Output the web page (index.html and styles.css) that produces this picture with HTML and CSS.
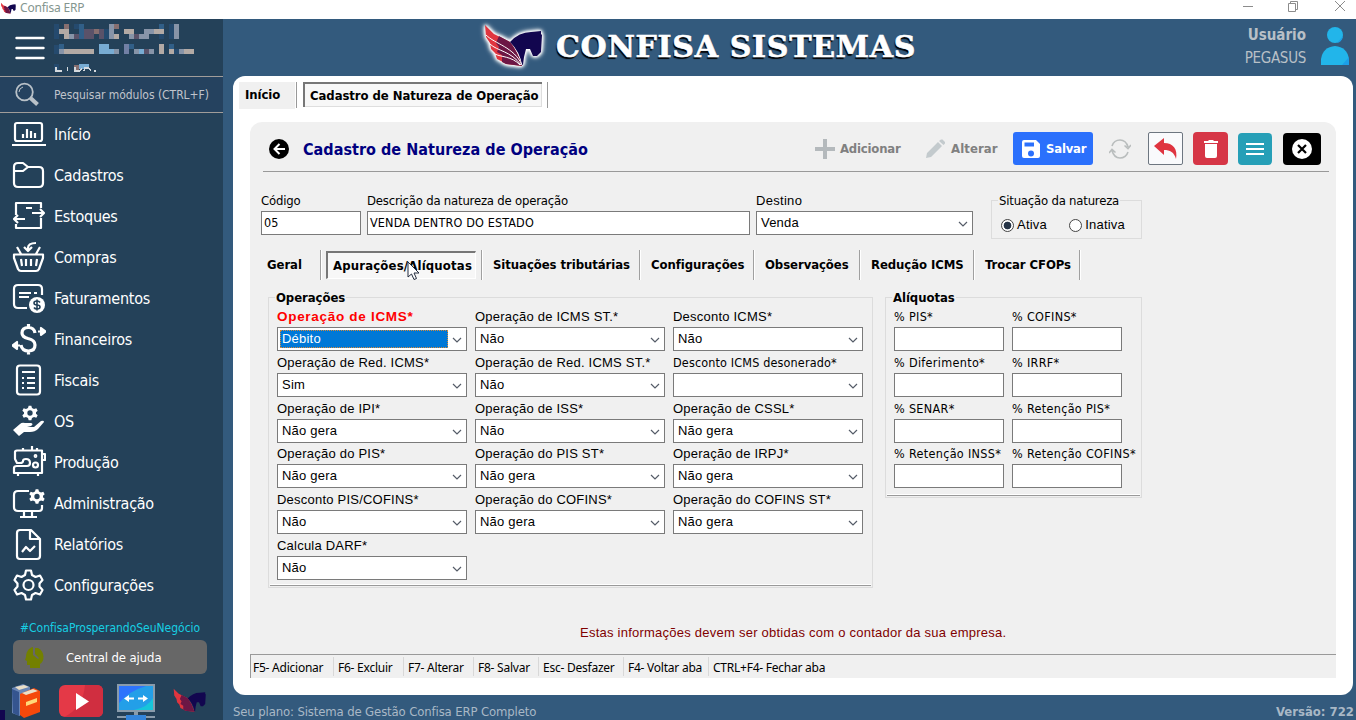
FILE: index.html
```html
<!DOCTYPE html>
<html lang="pt-BR">
<head>
<meta charset="utf-8">
<title>Confisa ERP</title>
<link rel="stylesheet" href="styles.css">
</head>
<body>
<svg class="defs" width="0" height="0" aria-hidden="true">
  <symbol id="pegasus" viewBox="0 0 64 46">
    <path fill="#e0353f" d="M3 3L12 12L28 20Q36 30 40 44L24 42L19 39L15 37L13 31L9 27L8 21L4 15Z"/>
    <path fill="#6c1745" d="M17 14L28 20Q36 30 40 44L24 42L20 40V33L15 30L17 25L14 21Z"/>
    <path fill="#12064f" d="M28 20Q37 10 49 10L59 9V12L60 13L59 30L55 34H51L48 27L44 27L42 35L41 43H40Q38 30 28 20Z"/>
  </symbol>
  <symbol id="feathers" viewBox="0 0 64 46">
    <path fill="none" stroke="#fff" stroke-width="1" d="M4 13C13 22 32 25 40 43M8 22C15 29 29 29 39 43M13 32C18 35 30 34 38 43"/>
  </symbol>
  <symbol id="chev" viewBox="0 0 10 6"><path d="M1 1L5 5L9 1" fill="none" stroke="#555c68" stroke-width="1.2"/></symbol>
  <symbol id="gear" viewBox="0 0 24 24"><path fill-rule="evenodd" d="M10 1H14L15 4.5L18 6L21.500 5L23.500 8.500L21 11V13L23.500 15.500L21.500 19L18 18L15 19.500L14 23H10L9 19.500L6 18L2.500 19L.5 15.500L3 13V11L.5 8.500L2.500 5L6 6L9 4.500ZM12 8A4 4 0 1 0 12 16A4 4 0 1 0 12 8Z"/></symbol>
</svg>

<div class="titlebar">
  <svg class="tb-logo" width="17" height="12"><use href="#pegasus"/></svg>
  <span class="tb-name">Confisa ERP</span>
  <svg class="tb-ctl" width="104" height="14" fill="none" stroke="#8c8c8c"><path d="M1 6.500H11"/><path d="M46.500 3.500H53.500V11.500H46.500ZM48.500 3.500V1.500H55.500V9.500H53.500"/><path d="M93 1L103 11M103 1L93 11"/></svg>
</div>

<div class="app">
  <aside class="side">
    <div class="company">
      <svg width="30" height="24" stroke="#fff" stroke-width="2.400" stroke-linecap="round"><path d="M1.500 2H28.500M1.500 12H28.500M1.500 22H28.500"/></svg>
      <svg class="mosaic" width="145" height="53" shape-rendering="crispEdges">
        <g fill="#254a6e"><path d="M0 5h5v15h-5zM10 5h5v5h-5zM20 5h5v5h-5zM50 10h5v10h-5zM115 5h5v15h-5zM105 15h5v5h-5zM0 26h5v9h-5zM45 26h5v5h-5zM70 30h5v5h-5zM120 30h5v5h-5zM0 45h5v7h-5z"/></g>
        <g fill="#b3aaa5"><path d="M5 10h5v5h-5zM10 10h5v10h-5zM60 5h5v10h-5zM70 10h10v5h-10zM100 10h10v5h-10zM10 30h30v5h-30zM105 25h5v10h-5zM115 30h5v5h-5zM130 30h10v5h-10zM65 5h-5v15h5z"/></g>
        <g fill="#876f70"><path d="M10 5h5v5h-5zM25 10h5v5h-5zM40 10h5v5h-5zM60 5h5v5h-5zM20 46h5v5h-5z"/></g>
        <g fill="#5a5269"><path d="M20 15h5v5h-5zM30 10h10v10h-10zM45 10h5v10h-5zM80 15h5v5h-5zM90 30h5v5h-5z"/></g>
        <g fill="#8794a8"><path d="M15 15h5v5h-5zM55 5h5v15h-5zM75 15h5v5h-5zM85 15h10v5h-10zM120 5h5v15h-5zM90 10h10v5h-10zM5 30h5v5h-5zM60 30h5v5h-5zM80 30h5v5h-5zM95 30h5v5h-5zM125 30h5v5h-5z"/></g>
        <g fill="#78acd3"><path d="M45 25h10v10h-10zM55 30h5v5h-5zM85 30h5v5h-5zM25 45h10v5h-10z"/></g>
        <path fill="#315f88" d="M25 5h5v15h-5zM5 25h5v5h-5zM75 25h5v5h-5zM105 5h5v5h-5zM115 25h5v5h-5z"/>
        <path fill="#7280a5" d="M70 25h5v10h-5z"/>
        <path fill="none" stroke="#d4d9de" stroke-width="1.300" d="M2 48v4h6M13.500 48v4M21 48v4h5l2-3M30 52l1-3h4l2 3M40 52h2"/>
      </svg>
    </div>
    <div class="search">
      <svg width="26" height="25" fill="none" stroke="#b9c1c8"><circle cx="10.500" cy="10" r="8.300" stroke-width="1.800"/><path d="M5 10A5.500 5.500 0 0 1 9 5" stroke-width="1"/><path d="M16.500 16L23.500 22.500" stroke-width="4"/></svg>
      <span>Pesquisar módulos (CTRL+F)</span>
    </div>
    <nav class="menu">
      <a><svg viewBox="0 0 34 34"><rect x="3" y="6" width="27" height="18" rx="2"/><path d="M0 28H34M11 21V17M15 21V12M19 21V14M23 21V16"/></svg><span>Início</span></a>
      <a><svg viewBox="0 0 34 34"><path d="M2 9Q2 5 6 5H11L16 9H27Q31 9 31 13V25Q31 29 27 29H6Q2 29 2 25ZM2 13H11L16 9"/></svg><span>Cadastros</span></a>
      <a><svg viewBox="0 0 34 34"><path d="M4 16V4H29V9M4 25V29H29V19M14 9H20M20 14H32M28 10L32 14L28 18M13 20H2M6 16L2 20L6 24"/></svg><span>Estoques</span></a>
      <a><svg viewBox="0 0 34 34"><path d="M2 14.500H31V18L27 29Q26 31 24 31H9Q7 31 6 29L2 18ZM9 14L5 7M24 14L28 7M16 11V8Q16 3 24 3M12 7L16 11L20 7M9 19L10 26M14 19V26M19 19V26M25 19L24 26"/></svg><span>Compras</span></a>
      <a><svg viewBox="0 0 34 34"><path d="M15 27H6Q2 27 2 23V8Q2 4 6 4H26Q30 4 30 8V14M7 12H19M22 12H25M7 16H17"/><circle cx="25" cy="24" r="8" fill="#fff" stroke="none"/><path class="ink" d="M28 21.500Q27 20 25 20Q22 20 22 22Q22 24 25 24Q28 24 28 26Q28 28 25 28Q23 28 22 26.500M25 18.500V29.500"/></svg><span>Faturamentos</span></a>
      <a><svg viewBox="0 0 34 34"><path class="thick" d="M23 11Q22 5.500 16.500 5.500Q10 5.500 10 11Q10 15 16 16.500Q23 18 23 23Q23 29 16.500 29Q10 29 9 23M16.500 2V5M16.500 29V32.500"/><path fill="#fff" d="M26 9.500H29M29 6V13L33.500 9.500ZM8 23.500H5M5 20V27L.5 23.500Z"/></svg><span>Financeiros</span></a>
      <a><svg viewBox="0 0 34 34"><rect x="5" y="2.500" width="23" height="29" rx="3"/><path d="M10 9H23M10 15H12M15 15H23M10 20H12M15 20H23M10 25H12M15 25H23"/></svg><span>Fiscais</span></a>
      <a><svg viewBox="0 0 34 34"><use href="#gear" x="10" y="1" width="16" height="16" fill="#fff" stroke="none"/><path fill="#fff" stroke="none" d="M1 26L8 20Q10 18 13 19H19Q22 20 19 22L15 23H22L29 17Q32 16 32 18L26 25Q23 28 18 28H12L7 32Z"/></svg><span>OS</span></a>
      <a><svg viewBox="0 0 34 34"><path d="M5 18L3 14V7Q3 5.500 5 5.500H30V28H2V23Q2 21 5 21H15Q18 21 18 18Q18 14 14 14Q11 14 11 16Q11 18 8 18ZM11 3V5M20 1V5M25 3V5M6 29V31M26 29V31M30 9H33V15H30"/><circle cx="23.500" cy="11" r=".8"/><circle cx="23.500" cy="20" r="2.500"/></svg><span>Produção</span></a>
      <a><svg viewBox="0 0 34 34"><path d="M17 5H6Q2 5 2 9V21Q2 25 6 25H27Q30 25 30 22V19M12 25V30M20 25V30M8 31H25"/><use href="#gear" x="17" y="2" width="16" height="17" fill="#fff" stroke="none"/></svg><span>Administração</span></a>
      <a><svg viewBox="0 0 34 34"><path d="M5 6Q5 3 8 3H19L28 12V29Q28 32 25 32H8Q5 32 5 29ZM18 4V12H27M10 25L14 20L18 24L23 19"/></svg><span>Relatórios</span></a>
      <a><svg viewBox="0 0 34 34"><path d="M14 2.500H19L20 7L23.500 9L28 7.500L30.500 12L27.500 15.500V18.500L30.500 22L28 26.500L23.500 25L20 27L19 31.500H14L13 27L9.500 25L5 26.500L2.500 22L5.500 18.500V15.500L2.500 12L5 7.500L9.500 9L13 7Z"/><circle cx="16.500" cy="17" r="5"/></svg><span>Configurações</span></a>
    </nav>
    <div class="tag">#ConfisaProsperandoSeuNegócio</div>
    <div class="help">
      <svg width="20" height="21" fill="#738000"><path d="M8 0C3 1 1 6 1 10L0 13L2 14V18H5V21H15V17C20 15 20 4 13 1H10V7L14 11L13 12L8 8Z"/></svg>
      <span>Central de ajuda</span>
    </div>
    <div class="links">
      <svg width="28" height="35"><path fill="#6986b5" d="M0 4L11 0L18 3V8L8 12V32L0 29Z"/><path fill="#eadfc8" d="M3 3L12 1L17 3L7 6Z"/><path fill="#35558f" d="M0 5L7 8V32L1 29Z"/><path fill="#f5480b" d="M8 10L22 4L28 7V28L12 34L8 31Z"/><path fill="#eadfc8" d="M10 9L21 5L26 7L14 11Z"/><path fill="#ffd978" d="M14 18L25 14V18L14 22Z"/></svg>
      <svg width="44" height="32"><rect width="44" height="32" rx="6" fill="#e43947"/><path d="M26 0H38Q44 0 44 6V26Q44 32 38 32H5Q24 23 26 0Z" fill="#d02e40"/><path d="M17 8V25L30 16.500Z" fill="#fff"/></svg>
      <svg width="38" height="36"><path fill="#899bab" d="M0 0H38V28H0Z"/><path fill="#239fe8" d="M2 2H36V26H2Z"/><path fill="#2d74fc" d="M2 2H29Q12 7 2 19Z"/><path fill="#16c5da" d="M36 14V26H17Q31 23 36 14Z"/><path fill="#fff" d="M7 14.500L12 11V13.500H17V15.500H12V18ZM31 14.500L26 11V13.500H21V15.500H26V18Z"/><path fill="#899bab" d="M17 28H21V31H17ZM0 32H38V34H0Z"/><path fill="#3285dc" d="M9 31H29V36H9Z"/></svg>
      <svg width="36" height="26"><use href="#pegasus"/></svg>
    </div>
    <i class="corner"></i>
  </aside>

  <section class="main">
    <header class="head">
      <div class="brand">
        <svg width="68" height="51"><use href="#pegasus" x="1" y="2" width="64" height="46"/><use href="#feathers" x="1" y="2" width="64" height="46"/></svg>
        <span>CONFISA SISTEMAS</span>
      </div>
      <div class="user">
        <div><b>Usuário</b><span>PEGASUS</span></div>
        <svg width="28" height="38"><circle cx="14" cy="8" r="8" fill="#22b5ea"/><path fill="#22b5ea" d="M0 38V32Q2 20 14 19Q26 20 28 32V38Z"/><path fill="#1c9fe8" d="M21 38L28 30V38ZM16 16L22 9Q21 15 16 16Z"/></svg>
      </div>
    </header>

    <div class="panel">
      <div class="doctabs">
        <span class="doctab">Início</span>
        <span class="doctab on">Cadastro de Natureza de Operação</span>
      </div>

      <div class="sheet">
        <div class="toolbar">
          <svg class="back" width="20" height="20"><circle cx="10" cy="10" r="10"/><path d="M16 10H6M10.500 5L5.500 10L10.500 15" fill="none" stroke="#fff" stroke-width="2"/></svg>
          <h1>Cadastro de Natureza de Operação</h1>
          <div class="act add"><svg width="20" height="20" fill="#b4b9bc"><path d="M8 0H12V8H20V12H12V20H8V12H0V8H8Z"/></svg>Adicionar</div>
          <div class="act edit"><svg width="20" height="20" fill="#c3cacd"><path d="M0 19L1 14L12 3L16 7L5 18ZM13 2L15 .5H16.500L19 3V4.500L17.500 6Z"/></svg>Alterar</div>
          <div class="act save"><svg width="18" height="18"><path fill="#fff" fill-rule="evenodd" d="M2 0H14L18 4V16Q18 18 16 18H2Q0 18 0 16V2Q0 0 2 0ZM2.500 2.500V6.500H12V2.500ZM9 10.500A3 3 0 1 0 9 16.500A3 3 0 1 0 9 10.500Z"/></svg>Salvar</div>
          <svg class="sync" width="22" height="20" fill="none" stroke="#b9bdbd" stroke-width="1.600"><path d="M3 7Q5 1 11 1Q17 1 19 8M15.500 6.500L19 9.500L22 6M19 13Q17 19 11 19Q5 19 3 11.500M0 14L3 10.500L6.500 13.500"/></svg>
          <div class="sq undo"><svg width="24" height="21"><path fill="#df3440" d="M0 8L10 0V5C19 5 24 11 22 21C20 14 16 12 10 12V17Z"/></svg></div>
          <div class="sq trash"><svg width="14" height="18" fill="#fff"><path d="M0 1H4L5 0H9L10 1H14V3H0ZM1 4H13V16Q13 18 11 18H3Q1 18 1 16Z"/></svg></div>
          <div class="sq list"><svg width="18" height="12"><path stroke="#fff" stroke-width="2" d="M0 1H18M0 6H18M0 11H18"/></svg></div>
          <div class="sq close"><svg width="20" height="20"><circle cx="10" cy="10" r="10" fill="#fff"/><path d="M6 6L14 14M14 6L6 14" stroke="#000" stroke-width="2.200"/></svg></div>
        </div>

        <div class="top-fields">
          <label class="field f-cod"><span>Código</span><b class="box t">05</b></label>
          <label class="field f-desc"><span>Descrição da natureza de operação</span><b class="box t">VENDA DENTRO DO ESTADO</b></label>
          <label class="field f-dest"><span class="dst">Destino</span><b class="box ms">Venda<svg><use href="#chev"/></svg></b></label>
          <div class="radio-group">
            <h3>Situação da natureza</h3>
            <div class="radios ms"><i class="radio on"></i><span>Ativa</span><i class="radio"></i><span>Inativa</span></div>
          </div>
        </div>

        <div class="subtabs">
          <span class="st1">Geral</span><span class="st2"><em>Apurações/Alíquotas</em></span><span class="st3">Situações tributárias</span><span class="st4">Configurações</span><span class="st5">Observações</span><span class="st6">Redução ICMS</span><span class="st7">Trocar CFOPs</span>
        </div>

        <div class="groups">
          <div class="group ops">
            <h3>Operações</h3>
            <div class="grid ms">
              <label class="field hot"><span>Operação de ICMS*</span><b class="box"><mark>Débito</mark><svg><use href="#chev"/></svg></b></label>
              <label class="field"><span>Operação de ICMS ST.*</span><b class="box">Não<svg><use href="#chev"/></svg></b></label>
              <label class="field"><span>Desconto ICMS*</span><b class="box">Não<svg><use href="#chev"/></svg></b></label>
              <label class="field"><span>Operação de Red. ICMS*</span><b class="box">Sim<svg><use href="#chev"/></svg></b></label>
              <label class="field"><span>Operação de Red. ICMS ST.*</span><b class="box">Não<svg><use href="#chev"/></svg></b></label>
              <label class="field"><span class="tah">Desconto ICMS desonerado*</span><b class="box"><svg><use href="#chev"/></svg></b></label>
              <label class="field"><span>Operação de IPI*</span><b class="box">Não gera<svg><use href="#chev"/></svg></b></label>
              <label class="field"><span>Operação de ISS*</span><b class="box">Não<svg><use href="#chev"/></svg></b></label>
              <label class="field"><span>Operação de CSSL*</span><b class="box">Não gera<svg><use href="#chev"/></svg></b></label>
              <label class="field"><span>Operação do PIS*</span><b class="box">Não gera<svg><use href="#chev"/></svg></b></label>
              <label class="field"><span>Operação do PIS ST*</span><b class="box">Não gera<svg><use href="#chev"/></svg></b></label>
              <label class="field"><span>Operação de IRPJ*</span><b class="box">Não gera<svg><use href="#chev"/></svg></b></label>
              <label class="field"><span>Desconto PIS/COFINS*</span><b class="box">Não<svg><use href="#chev"/></svg></b></label>
              <label class="field"><span>Operação do COFINS*</span><b class="box">Não gera<svg><use href="#chev"/></svg></b></label>
              <label class="field"><span>Operação do COFINS ST*</span><b class="box">Não gera<svg><use href="#chev"/></svg></b></label>
              <label class="field"><span>Calcula DARF*</span><b class="box">Não<svg><use href="#chev"/></svg></b></label>
            </div>
          </div>
          <div class="group rates">
            <h3>Alíquotas</h3>
            <div class="grid">
              <label class="field"><span>% PIS*</span><b class="box"></b></label>
              <label class="field"><span>% COFINS*</span><b class="box"></b></label>
              <label class="field"><span>% Diferimento*</span><b class="box"></b></label>
              <label class="field"><span>% IRRF*</span><b class="box"></b></label>
              <label class="field"><span>% SENAR*</span><b class="box"></b></label>
              <label class="field"><span>% Retenção PIS*</span><b class="box"></b></label>
              <label class="field"><span>% Retenção INSS*</span><b class="box"></b></label>
              <label class="field"><span>% Retenção COFINS*</span><b class="box"></b></label>
            </div>
          </div>
        </div>

        <p class="note">Estas informações devem ser obtidas com o contador da sua empresa.</p>

        <div class="keys">
          <span class="k1">F5- Adicionar</span><span class="k2">F6- Excluir</span><span class="k3">F7- Alterar</span><span class="k4">F8- Salvar</span><span class="k5">Esc- Desfazer</span><span class="k6">F4- Voltar aba</span><span class="k7">CTRL+F4- Fechar aba</span>
        </div>
      </div>
    </div>

    <footer class="foot"><span>Seu plano: Sistema de Gestão Confisa ERP Completo</span><b>Versão: 722</b></footer>
  </section>
</div>
<svg class="cursor" width="13" height="20"><path d="M1 1V16L4.500 13L7 18.500L9.500 17.500L7 12H12Z" fill="#fff" stroke="#222b3d"/></svg>
</body>
</html>
```

FILE: styles.css
```css
* { box-sizing: border-box; }
body {
  margin: 0;
  width: 1356px;
  height: 720px;
  overflow: hidden;
  background: #fff;
  font: 13px/18px "DejaVu Sans Condensed", "DejaVu Sans", sans-serif;
  font-stretch: condensed;
  letter-spacing: -0.016em;
  white-space: nowrap;
  color: #000;
}
svg { display: block; flex: none; }
.defs { position: absolute; }
h1, h3, p { margin: 0; }

.titlebar { display: flex; height: 19px; padding-left: 0; }
.tb-logo { margin-top: 2px; }
.tb-name { margin: -1px 0 0 3px; font: 12px/18px "Noto Sans", sans-serif; letter-spacing: -0.2px; color: #84968f; }
.tb-ctl { margin-left: auto; margin-right: 10px; }

.app { display: flex; height: 701px; background: #335a7d; }

/* sidebar */
.side { position: relative; width: 223px; background: #244159; color: #fff; overflow: hidden; }
.company { display: flex; height: 57px; padding: 17px 0 0 15px; }
.mosaic { margin: -17px 0 0 9px; }
.search {
  display: flex;
  align-items: center;
  height: 37px;
  padding-left: 14px;
  background: #25425f;
  border-top: 1px solid #a19d9a;
  border-bottom: 1px solid #a19d9a;
  color: #c0c4cc;
  font-size: 12px;
}
.search span { margin-left: 14px; letter-spacing: -0.04px; }
.menu { display: flex; flex-direction: column; }
.menu a { display: flex; align-items: center; height: 41px; padding-left: 12px; font-size: 16px; line-height: 20px; gap: 8px; letter-spacing: -0.26px; }
.menu span { padding-top: 2px; }
.menu svg { width: 34px; height: 34px; fill: none; stroke: #fff; stroke-width: 2.2; stroke-linejoin: round; }
.menu .ink { stroke: #244159; stroke-width: 1.6; }
.menu .thick { stroke-width: 3.2; }
.tag { margin: 14px 0 0 20px; font-size: 12px; letter-spacing: -0.02px; color: #17cfe3; line-height: 18px; }
.help { display: flex; align-items: center; width: 194px; height: 34px; margin: 3px 0 0 13px; padding-left: 12px; border-radius: 6px; background: #676767; font-size: 13px; letter-spacing: -0.1px; }
.help span { margin-left: 21px; padding-top: 2px; }
.links { display: flex; align-items: flex-start; padding: 10px 0 0 12px; }
.links svg:nth-child(2) { margin: 1px 0 0 19px; }
.links svg:nth-child(3) { margin-left: 14px; }
.links svg:nth-child(4) { margin: 3px 0 0 17px; }
.corner { position: absolute; left: 0; bottom: 0; width: 5px; height: 10px; background: #12064f; }

/* main */
.main { flex: 1; padding-left: 10px; display: flex; flex-direction: column; }
.head { display: flex; flex: none; height: 57px; }
.brand { display: flex; margin-left: 248px; }
.brand svg { margin-top: 1px; overflow: visible; filter: drop-shadow(0 0 1.5px #fff) drop-shadow(0 0 1.5px #fff) drop-shadow(0 0 2px #fff); }
.brand span {
  margin: 8px 0 0 7px;
  font: bold 30px/40px "DejaVu Serif", serif;
  letter-spacing: 0.7px;
  color: #fff;
  -webkit-text-stroke: 0.6px #fff;
  text-shadow: -1px 2px 1px #000;
}
.user { display: flex; margin-left: auto; padding: 5px 7px 0 0; gap: 15px; color: #b9c0c7; font-size: 15px; }
.user div { display: flex; flex-direction: column; text-align: right; line-height: 23px; }
.user b { letter-spacing: 0; }
.user span { letter-spacing: -0.3px; }
.user svg { margin-top: 3px; }

.panel { flex: none; width: 1120px; height: 619px; background: #fff; border-radius: 12px; padding: 6px 0 0 6px; }
.doctabs { display: flex; height: 40px; font-weight: bold; letter-spacing: -0.07px; }
.doctab { height: 27px; width: 56px; padding-left: 6px; line-height: 25px; background: #f0f0f0; }
.doctab.on {
  width: 252px;
  height: 26px;
  margin-left: 1px;
  line-height: 27px;
  background: linear-gradient(#777, #777) 6px 0 / 239px 2px no-repeat, linear-gradient(#777, #777) 6px 0 / 2px 25px no-repeat, linear-gradient(#dedede, #dedede) 244px 0 / 1px 24px no-repeat, linear-gradient(#dedede, #dedede) 6px 24px / 239px 1px no-repeat, linear-gradient(#f7f7f7, #f7f7f7) 6px 0 / 239px 24px no-repeat;
  border-left: 1px solid #999;
  border-right: 1px solid #999;
  padding-left: 13px;
}

.sheet { width: 1086px; height: 556px; margin-left: 11px; background: #f0f0f0; border-radius: 12px 12px 0 0; display: flex; flex-direction: column; }
.toolbar { display: flex; align-items: center; height: 50px; margin: 0 7px 0 13px; padding: 4px 8px 0 6px; border-bottom: 1px solid #999; }
.toolbar h1 { margin-left: 14px; padding-top: 2px; font-size: 16px; line-height: 20px; letter-spacing: 0.03px; color: #000080; }
.act { display: flex; align-items: center; font-weight: bold; color: #808080; }
.add { margin-left: auto; gap: 5px; width: 111px; }
.edit { gap: 5px; width: 87px; letter-spacing: 0.1px; }
.save { width: 80px; height: 33px; padding-left: 9px; gap: 6px; border-radius: 3px; background: #2b70fc; color: #fff; }
.sync { margin: 0 17px 0 16px; }
.sq { display: flex; align-items: center; justify-content: center; width: 35px; height: 33px; border-radius: 4px; }
.undo { background: #f9fafc; border: 1px solid #6d7680; border-radius: 2px; }
.trash { margin-left: 10px; background: #d63646; }
.list { width: 34px; height: 32px; margin-left: 10px; background: #269fb7; }
.close { width: 38px; height: 32px; margin-left: 11px; background: #000; }

.field { display: flex; flex-direction: column; }
.field > span { height: 18px; margin-bottom: 2px; line-height: 20px; }
.box { display: flex; align-items: center; height: 24px; border: 1px solid #7a7a7a; background: #fff; font-weight: normal; padding: 0 4px; }
.box svg { width: 10px; height: 6px; margin-left: auto; margin-top: 1px; }
.t { padding-left: 2px; font-size: 12.5px; letter-spacing: 0.15px; }
.ms, .ms .field > span, .dst, .note { font-family: "Liberation Sans", Arial, sans-serif; letter-spacing: 0.22px; font-size: 13px; }
.field > .dst { letter-spacing: 0.3px; }

.top-fields { display: flex; padding-left: 11px; margin-top: 19px; height: 49px; }
.f-cod { width: 100px; }
.f-desc { width: 383px; margin-left: 6px; }
.f-dest { width: 217px; margin-left: 6px; }
.radio-group { width: 151px; height: 39px; margin: 9px 0 0 18px; border: 1px solid #dcdcdc; }
.radio-group h3 { width: fit-content; margin: -9px 0 0 6px; padding: 0 1px; background: #f0f0f0; font-size: 13px; font-weight: normal; line-height: 18px; }
.radios { display: flex; align-items: center; margin: 5px 0 0 9px; line-height: 20px; }
.radio { width: 13px; height: 13px; border: 1px solid #444; border-radius: 50%; background: #fff; }
.radio.on { background: radial-gradient(circle, #263447 3.5px, #fff 4.2px); }
.radios span { margin-left: 3px; }
.radio + span + .radio { margin-left: auto; }
.radios span:last-child { margin-right: 16px; }

.subtabs { display: flex; height: 30px; margin-top: 10px; font-weight: bold; line-height: 29px; letter-spacing: -0.07px; }
.subtabs > span { padding-left: 11px; border-right: 1px solid #a0a0a0; box-shadow: 1px 0 #fff; }
.subtabs .st1 { width: 71px; padding-left: 17px; }
.st2 { width: 161px; }
.subtabs .st2 { padding: 1px 5px; }
.st2 em { display: block; height: 28px; padding-left: 5px; font-style: normal; background: #f7f7f7; border: 1px solid #fff; border-top: 2px solid #777; border-left: 2px solid #777; line-height: 26px; letter-spacing: 0.17px; }
.st3 { width: 158px; }
.st4 { width: 114px; }
.st5 { width: 106px; }
.st6 { width: 114px; }
.st7 { width: 106px; }

.groups { display: flex; margin: 17px 0 0 18px; gap: 12px; align-items: flex-start; }
.group { border: 1px solid #dcdcdc; padding: 0 8px; background: linear-gradient(#999, #999) 1px calc(100% - 1px) / calc(100% - 2px) 1px no-repeat, linear-gradient(#fff, #fff) 1px calc(100% - 2px) / calc(100% - 2px) 1px no-repeat; }
.group h3 { width: fit-content; margin: -9px 0 0 -2px; padding: 0 1px; background: #f0f0f0; font-size: 13px; line-height: 18px; letter-spacing: -0.07px; }
.grid { display: grid; }
.ops { width: 605px; height: 291px; }
.ops .grid { grid-template-columns: repeat(3, 190px); grid-template-rows: 46px 46px 45px 46px 46px 46px; column-gap: 8px; }
.rates { width: 257px; height: 201px; }
.rates .grid { grid-template-columns: repeat(2, 110px); grid-template-rows: 46px 46px 45px 46px; column-gap: 8px; }
.ms .field.hot > span { font-size: 13.5px; font-weight: bold; letter-spacing: 0.7px; color: #f00; }
.hot .box { padding: 0 4px 0 2px; }
mark { width: 168px; height: 18px; padding-left: 2px; line-height: 17px; background: #0078d7; color: #fff; outline: 1px dotted #d88a3a; outline-offset: -1px; }
.ms .field > .tah { font-family: "DejaVu Sans Condensed", "DejaVu Sans", sans-serif; font-size: 12.5px; letter-spacing: 0.15px; }
.rates .field > span { font-size: 12.5px; letter-spacing: 0.32px; }

.note { margin: 36px 0 0 330px; line-height: 18px; color: #800000; letter-spacing: 0.24px; }
.keys { display: flex; height: 24px; margin-top: auto; padding: 2px 0 2px 0; border-top: 1px solid #999; border-left: 1px solid #999; font: 12px/21px "Noto Sans", sans-serif; letter-spacing: -0.24px; }
.keys span { border-right: 1px solid #d8d8d8; padding-left: 4px; }
.keys .k1 { width: 83px; padding-left: 2px; }
.k2 { width: 70px; }
.k3 { width: 70px; }
.k4 { width: 65px; }
.k5 { width: 85px; }
.k6 { width: 85px; }
.keys .k7 { border: 0; }

.foot { display: flex; justify-content: space-between; height: 25px; padding: 8px 2px 0 0; color: #a9b8c6; line-height: 18px; letter-spacing: -0.13px; }
.foot b { letter-spacing: 0; }
.cursor { position: absolute; left: 407px; top: 261px; }
```
